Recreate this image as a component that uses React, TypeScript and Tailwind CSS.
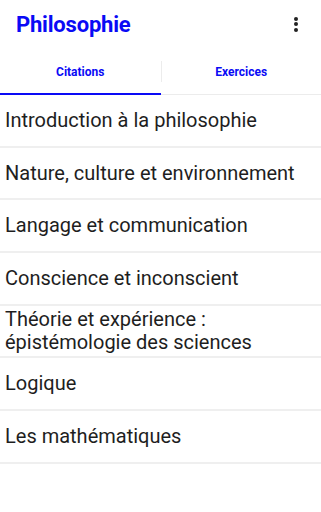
import { useState } from 'react';

const CHAPTERS = [
  'Introduction à la philosophie',
  'Nature, culture et environnement',
  'Langage et communication',
  'Conscience et inconscient',
  'Théorie et expérience : épistémologie des sciences',
  'Logique',
  'Les mathématiques',
];

const TABS = ['Citations', 'Exercices'];

export default function App() {
  const [tab, setTab] = useState(0);

  return (
    <div className="w-[321px] h-[512px] bg-white overflow-hidden font-['Roboto',sans-serif]">
      <header className="h-[48px] flex items-center justify-between pl-[16px] pr-[23px]">
        <h1 className="text-[22px] font-bold text-[#0a0af5] tracking-[-0.2px]">Philosophie</h1>
        <button className="flex flex-col gap-[1.5px] items-center">
          <span className="w-[4px] h-[4px] rounded-full bg-[#222]" />
          <span className="w-[4px] h-[4px] rounded-full bg-[#222]" />
          <span className="w-[4px] h-[4px] rounded-full bg-[#222]" />
        </button>
      </header>

      <nav className="flex items-stretch h-[46px] border-b border-[#ececec] mt-[1px]">
        {TABS.map((t, i) => (
          <div key={t} className="flex-1 flex items-stretch">
            {i > 0 && <span className="w-px bg-[#ececec] my-[12px]" />}
            <button
              onClick={() => setTab(i)}
              className="flex-1 relative flex items-center justify-center text-[12px] font-bold text-[#0a0af5]"
            >
              {t}
              {tab === i && (
                <span className="absolute left-0 right-0 -bottom-[1px] h-[2px] bg-[#0a0af5]" />
              )}
            </button>
          </div>
        ))}
      </nav>

      <ul>
        {CHAPTERS.map((c) => (
          <li
            key={c}
            className="h-[52.7px] flex items-center px-[5px] border-b-2 border-[#efefef] text-[20px] leading-[23px] text-[#1e1e1e]"
          >
            {c}
          </li>
        ))}
      </ul>
    </div>
  );
}
